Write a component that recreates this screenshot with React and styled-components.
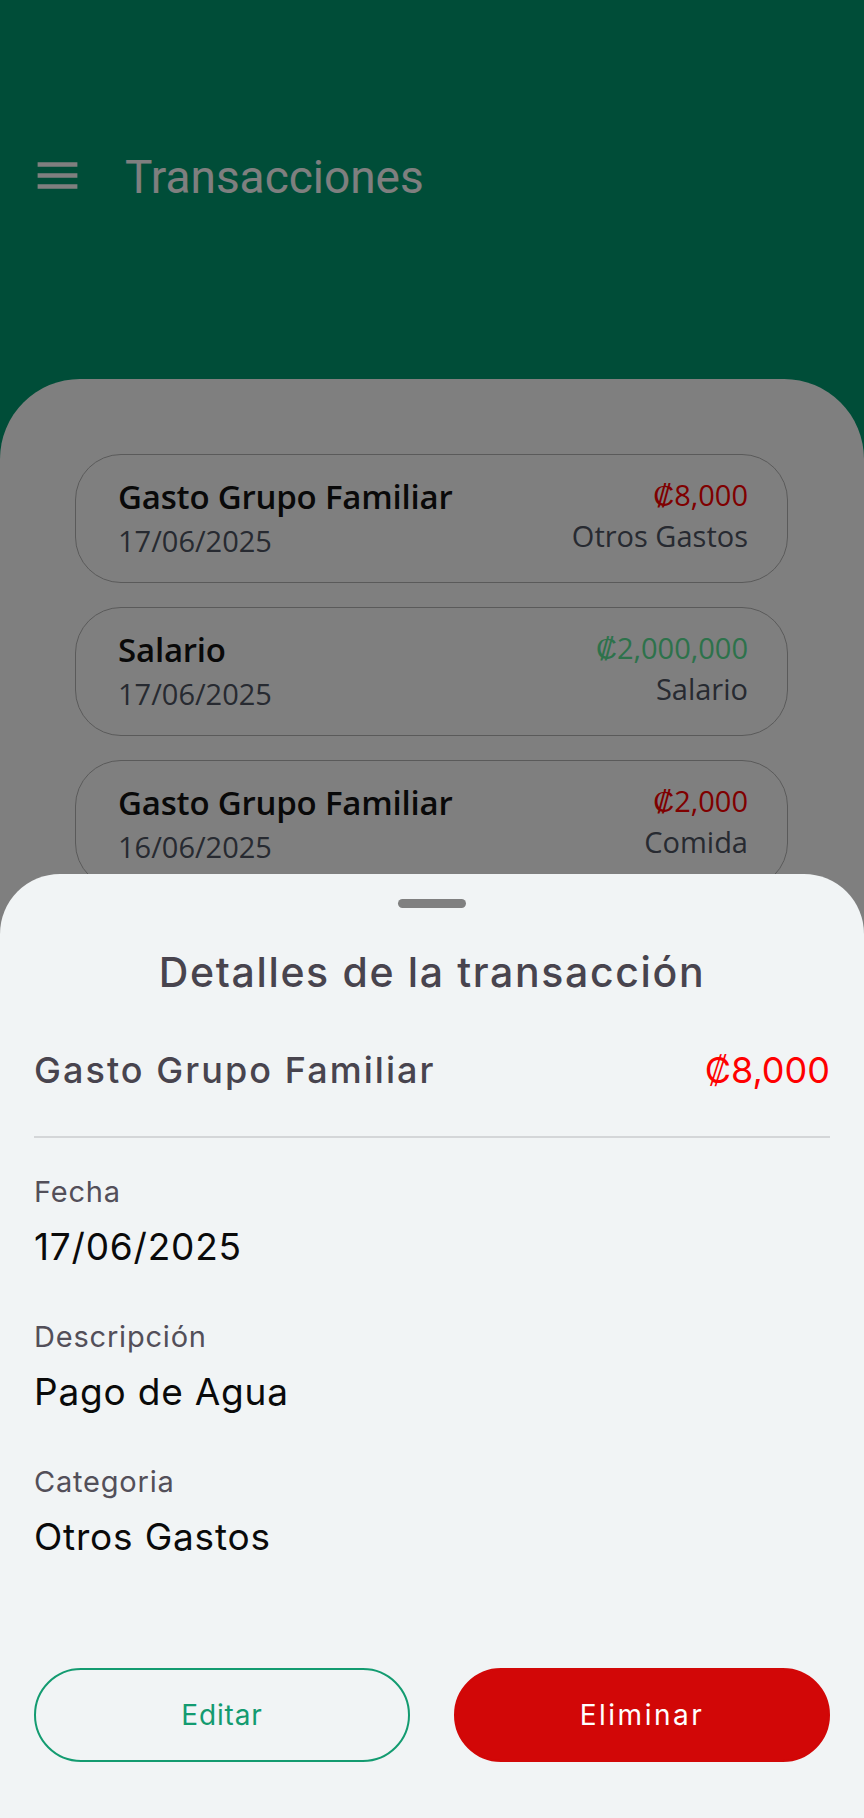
import styled, { createGlobalStyle } from 'styled-components'

const GlobalStyle = createGlobalStyle`
  html, body {
    margin: 0;
    padding: 0;
  }
  body {
    font-family: "Open Sans", "Liberation Sans", sans-serif;
  }
  * {
    box-sizing: border-box;
  }
`

const transactions = [
  { id: 1, title: 'Gasto Grupo Familiar', date: '17/06/2025', amount: '₡8,000', category: 'Otros Gastos', type: 'expense' },
  { id: 2, title: 'Salario', date: '17/06/2025', amount: '₡2,000,000', category: 'Salario', type: 'income' },
  { id: 3, title: 'Gasto Grupo Familiar', date: '16/06/2025', amount: '₡2,000', category: 'Comida', type: 'expense' },
]

const details = [
  { label: 'Fecha', value: '17/06/2025' },
  { label: 'Descripción', value: 'Pago de Agua' },
  { label: 'Categoria', value: 'Otros Gastos' },
]

const Screen = styled.div`
  position: relative;
  width: 100%;
  height: 1818px;
  overflow: hidden;
  background: #009b70;
`

const Header = styled.header`
  height: 379px;
  padding: 149px 0 0 31px;
  display: flex;
  align-items: flex-start;
  gap: 41px;
`

const MenuButton = styled.button`
  width: 53px;
  height: 53px;
  padding: 0;
  border: none;
  background: none;
  color: #ffffff;
  display: flex;
  & svg {
    width: 53px;
    height: 53px;
  }
`

const HeaderTitle = styled.h1`
  margin: 0;
  font-family: Roboto, "Liberation Sans", sans-serif;
  font-weight: 400;
  font-size: 46px;
  line-height: 56px;
  color: #ffffff;
`

const Content = styled.main`
  background: #ffffff;
  border-radius: 80px 80px 0 0;
  min-height: 1439px;
  padding: 75px 76px 0 75px;
  display: flex;
  flex-direction: column;
  gap: 24px;
`

const Card = styled.div`
  border: 1.5px solid #b4b4b4;
  border-radius: 46px;
  padding: 22px 39px 23px 42px;
  display: flex;
  justify-content: space-between;
  align-items: flex-start;
`

const Column = styled.div`
  display: flex;
  flex-direction: column;
  align-items: ${p => (p.$right ? 'flex-end' : 'flex-start')};
  gap: ${p => (p.$right ? '5px' : '6px')};
`

const CardTitle = styled.div`
  font-size: 33px;
  font-weight: 600;
  line-height: 40px;
  letter-spacing: -0.2px;
  color: #121212;
`

const CardMeta = styled.div`
  font-size: 29px;
  line-height: 36px;
  color: #4e5462;
`

const CardAmount = styled.div`
  font-size: 29px;
  font-weight: 500;
  line-height: 36px;
  color: ${p => (p.$income ? '#5ae596' : '#ff0000')};
`

const Scrim = styled.div`
  position: absolute;
  inset: 0;
  background: rgba(0, 0, 0, 0.5);
`

const Sheet = styled.section`
  position: absolute;
  left: 0;
  right: 0;
  bottom: 0;
  height: 944px;
  background: #f1f4f5;
  border-radius: 60px 60px 0 0;
  padding: 25px 34px 56px;
  display: flex;
  flex-direction: column;
  font-family: Inter, "DejaVu Sans", sans-serif;
  letter-spacing: 0.05em;
`

const Handle = styled.div`
  align-self: center;
  width: 68px;
  height: 9px;
  border-radius: 5px;
  background: #808080;
`

const SheetTitle = styled.h2`
  margin: 40px 0 0;
  text-align: center;
  font-size: 41px;
  font-weight: 500;
  line-height: 49px;
  letter-spacing: 0.04em;
  color: #48444e;
`

const SummaryRow = styled.div`
  margin-top: 51px;
  padding-bottom: 44px;
  border-bottom: 2px solid #d4d6d8;
  display: flex;
  justify-content: space-between;
  align-items: center;
  font-size: 36px;
  line-height: 44px;
`

const SummaryName = styled.span`
  font-weight: 500;
  letter-spacing: 0.057em;
  color: #48444e;
`

const SummaryAmount = styled.span`
  letter-spacing: 0;
  color: #ff0000;
`

const Fields = styled.div`
  margin-top: 36px;
  display: flex;
  flex-direction: column;
  gap: 50px;
`

const Field = styled.div`
  display: flex;
  flex-direction: column;
  gap: 15px;
`

const FieldLabel = styled.div`
  font-size: 29px;
  line-height: 36px;
  color: #534f59;
`

const FieldValue = styled.div`
  font-size: 37px;
  line-height: 44px;
  color: #0a0a0a;
`

const Actions = styled.div`
  margin-top: auto;
  display: grid;
  grid-template-columns: 1fr 1fr;
  gap: 44px;
`

const ActionButton = styled.button`
  height: 94px;
  border-radius: 47px;
  font-family: Inter, "DejaVu Sans", sans-serif;
  font-size: 28px;
  font-weight: 400;
  letter-spacing: ${p => (p.$danger ? '0.09em' : '0.03em')};
  cursor: pointer;
  border: 2.5px solid ${p => (p.$danger ? '#d20707' : '#139b70')};
  background: ${p => (p.$danger ? '#d20707' : 'transparent')};
  color: ${p => (p.$danger ? '#ffffff' : '#139b70')};
`

const MenuIcon = () => (
  <svg viewBox="0 0 24 24" fill="currentColor">
    <path d="M3 18h18v-2H3v2zm0-5h18v-2H3v2zm0-7v2h18V6H3z" />
  </svg>
)

export default function App() {
  return (
    <>
      <GlobalStyle />
      <Screen>
        <Header>
          <MenuButton aria-label="menu">
            <MenuIcon />
          </MenuButton>
          <HeaderTitle>Transacciones</HeaderTitle>
        </Header>
        <Content>
          {transactions.map(t => (
            <Card key={t.id}>
              <Column>
                <CardTitle>{t.title}</CardTitle>
                <CardMeta>{t.date}</CardMeta>
              </Column>
              <Column $right>
                <CardAmount $income={t.type === 'income'}>{t.amount}</CardAmount>
                <CardMeta>{t.category}</CardMeta>
              </Column>
            </Card>
          ))}
        </Content>
        <Scrim />
        <Sheet>
          <Handle />
          <SheetTitle>Detalles de la transacción</SheetTitle>
          <SummaryRow>
            <SummaryName>Gasto Grupo Familiar</SummaryName>
            <SummaryAmount>₡8,000</SummaryAmount>
          </SummaryRow>
          <Fields>
            {details.map(d => (
              <Field key={d.label}>
                <FieldLabel>{d.label}</FieldLabel>
                <FieldValue>{d.value}</FieldValue>
              </Field>
            ))}
          </Fields>
          <Actions>
            <ActionButton>Editar</ActionButton>
            <ActionButton $danger>Eliminar</ActionButton>
          </Actions>
        </Sheet>
      </Screen>
    </>
  )
}
